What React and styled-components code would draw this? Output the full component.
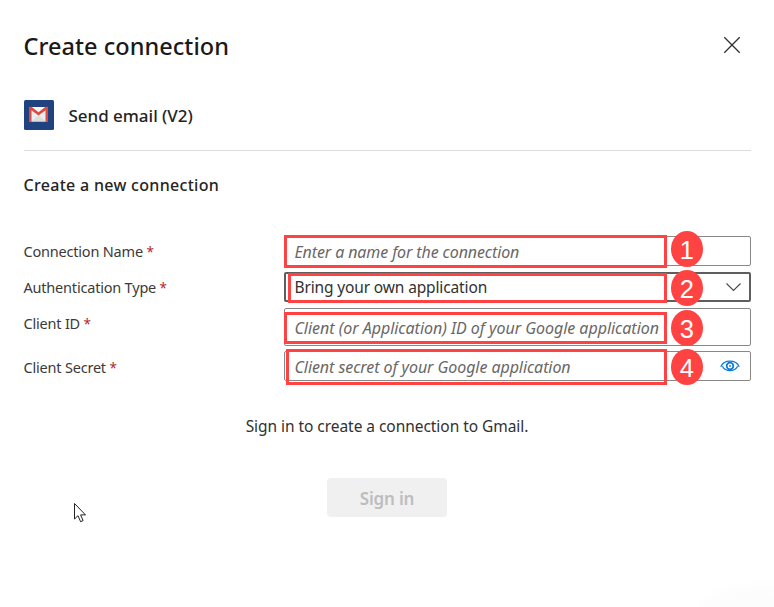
import React from "react";
import styled, { createGlobalStyle } from "styled-components";

const GlobalStyle = createGlobalStyle`
  * { box-sizing: border-box; }
  body {
    margin: 0;
    background: #fff;
    font-family: "Noto Sans", "Open Sans", sans-serif;
    color: #323130;
  }
`;

const Dialog = styled.main`
  position: relative;
  width: 774px;
  height: 607px;
  padding: 30px 23px 0 24px;
  overflow: hidden;
  background: radial-gradient(ellipse 76px 32px at 764px 612px, #fbfbfb 0%, #fdfdfd 75%, #fff 100%) #fff;
`;

const Header = styled.header`
  display: flex;
  justify-content: space-between;
  height: 32px;
`;

const Title = styled.h1`
  margin: 0 0 0 -0.5px;
  font-size: 23.5px;
  font-weight: 500;
  line-height: 32px;
  letter-spacing: 0.04px;
  color: #1b1a19;
`;

const CloseButton = styled.button`
  display: flex;
  width: 18px;
  height: 18px;
  margin: 6px 10.5px 0 0;
  padding: 0;
  border: 0;
  background: none;
`;

const Connector = styled.section`
  display: flex;
  gap: 14.5px;
  height: 51px;
  margin-top: 38px;
  border-bottom: 1px solid #dedddc;
`;

const ConnectorName = styled.h2`
  margin: 0;
  font-size: 17px;
  font-weight: 500;
  line-height: 32px;
  letter-spacing: -0.03px;
  color: #252423;
`;

const SectionTitle = styled.h3`
  margin: 22px 0 39px -0.5px;
  font-size: 16px;
  font-weight: 500;
  line-height: 24px;
  letter-spacing: 0.3px;
  color: #252423;
`;

const Form = styled.form`
  display: flex;
  flex-direction: column;
`;

const Row = styled.div`
  display: grid;
  grid-template-columns: 260px 467px;
  align-items: start;
  margin-bottom: ${(p) => p.$gap}px;
`;

const Label = styled.label`
  margin-left: -0.5px;
  padding-top: ${(p) => p.$top}px;
  font-size: 14.5px;
  line-height: 20px;
  letter-spacing: -0.2px;
  color: #3b3a39;
`;

const Required = styled.span`
  margin-left: 3.5px;
  font-size: 13.5px;
  line-height: 1;
  color: #b0262c;
`;

const Control = styled.div`
  position: relative;
  display: flex;
  align-items: center;
  justify-content: space-between;
  height: ${(p) => p.$height}px;
  padding: 0 ${(p) => (p.$strong ? 7 : 10)}px 0 ${(p) => (p.$strong ? 8.5 : 9.5)}px;
  border: ${(p) => (p.$strong ? "2px solid #605e5c" : "1px solid #8a8886")};
  border-radius: 2px;
  background: #fff;
`;

const Value = styled.span`
  font-size: 15.5px;
  letter-spacing: -0.14px;
  white-space: nowrap;
`;

const Placeholder = styled.span`
  padding-top: 2px;
  font-size: 16px;
  font-style: italic;
  letter-spacing: ${(p) => p.$tracking}px;
  white-space: nowrap;
  color: #696765;
`;

const Highlight = styled.div`
  position: absolute;
  left: ${(p) => p.$box.left}px;
  top: ${(p) => p.$box.top}px;
  width: ${(p) => p.$box.width}px;
  height: ${(p) => p.$box.height}px;
  border: 3px solid #ff4343;
`;

const Step = styled.div`
  position: absolute;
  z-index: 1;
  left: ${(p) => 386.5 - p.$border}px;
  top: ${(p) => p.$top}px;
  width: 32.5px;
  height: 36px;
  border-radius: 50%;
  background: #ff4343;
  color: #fff;
  font: 25.5px/38px "Liberation Sans", Arial, sans-serif;
  text-align: center;
`;

const Notice = styled.p`
  margin: 33px 1px 0 0;
  font-size: 15.5px;
  line-height: 24px;
  letter-spacing: -0.05px;
  text-align: center;
`;

const SignIn = styled.button`
  display: block;
  width: 120px;
  height: 39px;
  margin: 40px 0 0 303px;
  padding: 3px 0 0;
  border: 0;
  border-radius: 4px;
  background: #f0f0f0;
  color: #bdbdbd;
  font: 600 17px/36px "Noto Sans", sans-serif;
  letter-spacing: -0.2px;
`;

const Pointer = styled.svg`
  position: absolute;
  left: 73px;
  top: 502px;
`;

const CloseIcon = () => (
  <svg width="18" height="18" viewBox="0 0 18 18" fill="none" stroke="#323130" strokeWidth="1.3">
    <path d="M1.3 1.3 16.7 16.7M16.7 1.3 1.3 16.7" />
  </svg>
);

const GmailIcon = () => (
  <svg width="30" height="30" viewBox="0 0 30 30">
    <rect width="30" height="30" rx="1.5" fill="#20427f" />
    <path d="M5.500 7h18v14.500h-18z" fill="#ececec" />
    <path d="m7.500 21.500 7-6.500 7 6.500z" fill="#dcdcdc" />
    <path d="m8 7 6.500 5L21 7z" fill="#f6f6f6" />
    <path d="M5 8.200Q5 6.800 6.500 6.800h.9l7.100 5.500 7.100-5.500h.9q1.500 0 1.500 1.400V21.500h-2.500V10.300l-7 5.300-7-5.300V21.500H5z" fill="#dc4b40" />
  </svg>
);

const ChevronIcon = () => (
  <svg width="16" height="10" viewBox="0 0 16 10" fill="none" stroke="#484644" strokeWidth="1.1">
    <path d="m.5 1.500 7 7 7-7" />
  </svg>
);

const EyeIcon = () => (
  <svg width="20" height="12" viewBox="0 0 20 12" fill="none" stroke="#0f7bd4" strokeWidth="1.300">
    <path d="M.8 6.800C2.600 2.700 6 1.200 10 1.200s7.400 1.500 9.200 5.600M2.300 6.300C4 9.300 6.800 10.700 10 10.700s6-1.400 7.700-4.400" />
    <circle cx="10" cy="6" r="3.300" strokeWidth="1.800" />
    <circle cx="10" cy="6" r=".9" fill="#0f7bd4" stroke="none" />
  </svg>
);

const fields = [
  {
    label: "Connection Name", height: 30, gap: 6, labelTop: 5,
    placeholder: "Enter a name for the connection", tracking: -0.11,
    box: { left: -1, top: -2, width: 383, height: 33 }, stepTop: -6,
  },
  {
    label: "Authentication Type", height: 30, gap: 6, labelTop: 5, strong: true,
    value: "Bring your own application", icon: <ChevronIcon />,
    box: { left: 2, top: -1, width: 379, height: 30 }, stepTop: -4,
  },
  {
    label: "Client ID", height: 38, gap: 5, labelTop: 5,
    placeholder: "Client (or Application) ID of your Google application", tracking: -0.03,
    box: { left: -1, top: 3, width: 383, height: 32 }, stepTop: 1,
  },
  {
    label: "Client Secret", height: 30, gap: 0, labelTop: 6, icon: <EyeIcon />,
    placeholder: "Client secret of your Google application", tracking: -0.07,
    box: { left: 1, top: -3, width: 381, height: 36 }, stepTop: -3,
  },
];

function Field({ field, step }) {
  return (
    <Row $gap={field.gap}>
      <Label $top={field.labelTop}>{field.label}<Required>*</Required></Label>
      <Control $height={field.height} $strong={field.strong}>
        {field.value
          ? <Value>{field.value}</Value>
          : <Placeholder $tracking={field.tracking}>{field.placeholder}</Placeholder>}
        {field.icon}
        <Highlight $box={field.box} />
        <Step $top={field.stepTop} $border={field.strong ? 2 : 1}>{step}</Step>
      </Control>
    </Row>
  );
}

export default function App() {
  return (
    <>
      <GlobalStyle />
      <Dialog>
        <Header>
          <Title>Create connection</Title>
          <CloseButton aria-label="Close"><CloseIcon /></CloseButton>
        </Header>
        <Connector>
          <GmailIcon />
          <ConnectorName>Send email (V2)</ConnectorName>
        </Connector>
        <SectionTitle>Create a new connection</SectionTitle>
        <Form>
          {fields.map((field, i) => <Field key={field.label} field={field} step={i + 1} />)}
        </Form>
        <Notice>Sign in to create a connection to Gmail.</Notice>
        <SignIn disabled>Sign in</SignIn>
        <Pointer width="14" height="21" viewBox="0 0 14 21">
          <path d="M1.500 1.500v15.500l3.500-3.300 2.600 6 2.500-1.100-2.500-5.700h4.900z" fill="#fff" stroke="#222" strokeWidth="1" />
        </Pointer>
      </Dialog>
    </>
  );
}
